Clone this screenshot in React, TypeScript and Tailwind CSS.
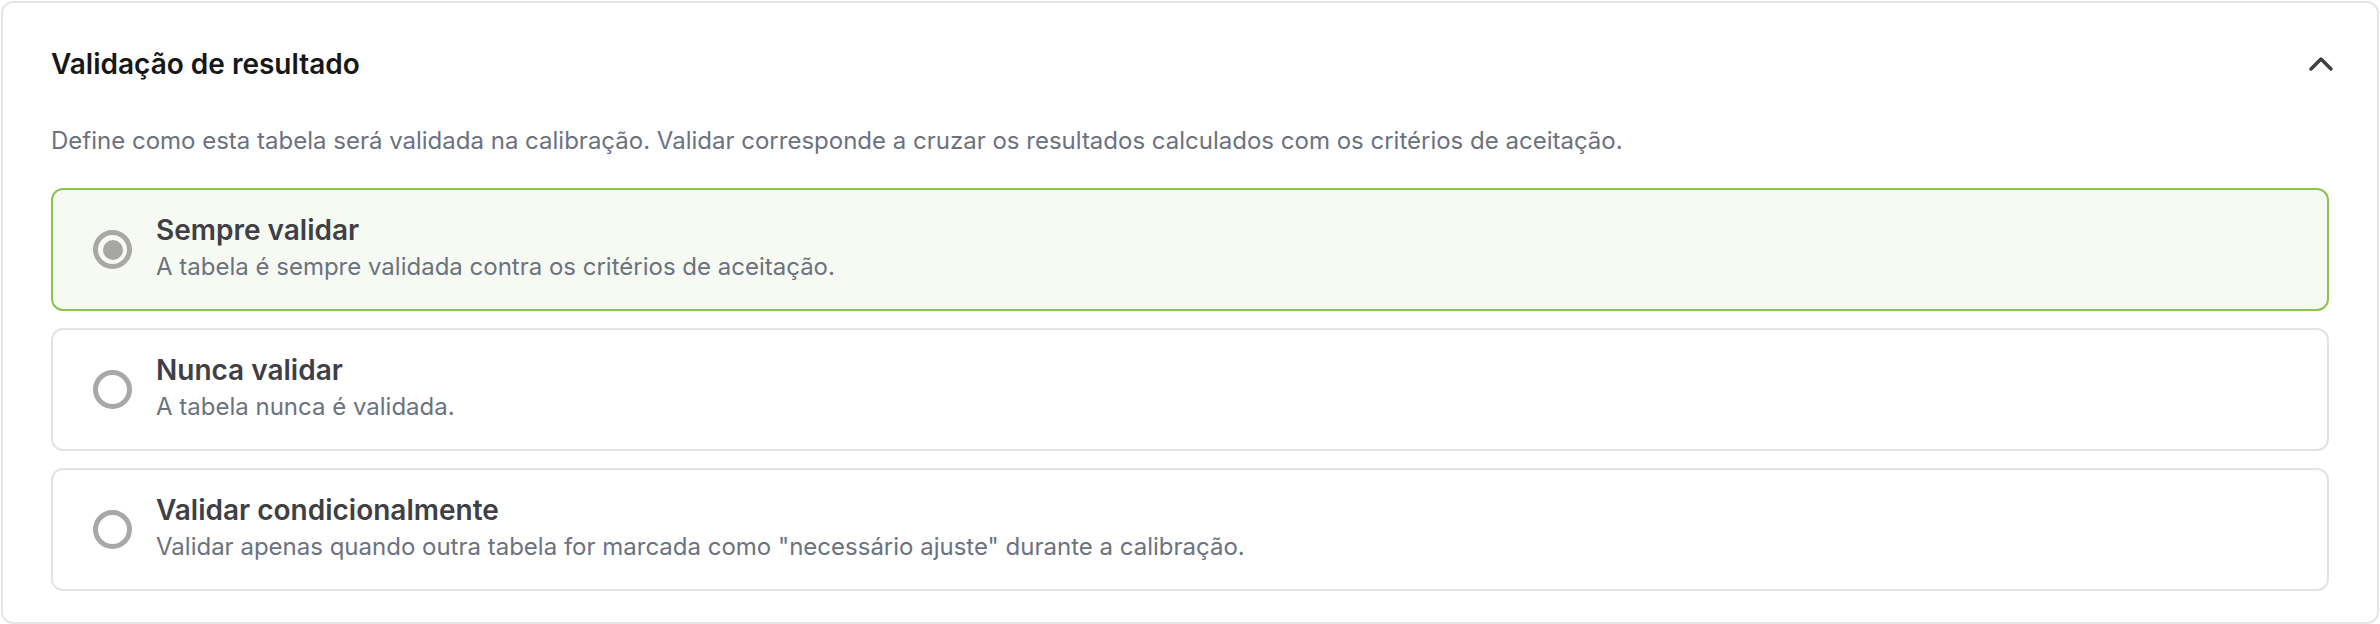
import { useState } from "react";

type Option = {
    id: string;
    title: string;
    description: string;
};

const options: Option[] = [
    {
        id: "always",
        title: "Sempre validar",
        description: "A tabela é sempre validada contra os critérios de aceitação.",
    },
    {
        id: "never",
        title: "Nunca validar",
        description: "A tabela nunca é validada.",
    },
    {
        id: "conditional",
        title: "Validar condicionalmente",
        description:
            'Validar apenas quando outra tabela for marcada como "necessário ajuste" durante a calibração.',
    },
];

const Radio = ({ checked }: { checked: boolean }): JSX.Element => (
    <span className="flex items-center justify-center shrink-0 w-[39px] h-[39px] rounded-full border-[5px] border-[#a8a8a6]">
        {checked && <span className="w-[20px] h-[20px] rounded-full bg-[#a6a6a2]" />}
    </span>
);

const OptionCard = ({
    option,
    checked,
    onSelect,
}: {
    option: Option;
    checked: boolean;
    onSelect: () => void;
}): JSX.Element => {
    return (
        <button
            type="button"
            onClick={onSelect}
            className={
                checked
                    ? "flex items-center gap-6 w-full pl-[40px] pr-6 py-[22px] text-left rounded-[12px] border-2 border-[#8cc451] bg-[#f7faf3]"
                    : "flex items-center gap-6 w-full pl-[40px] pr-6 py-[22px] text-left rounded-[12px] border-2 border-[#e3e3e3] bg-white"
            }
        >
            <Radio checked={checked} />
            <div className="flex flex-col gap-[3px] pb-[4px]">
                <p className="text-[28px] leading-[36px] font-semibold text-[#3f3f46]">{option.title}</p>
                <p className="text-[24px] leading-[32px] text-[#6b7280]">{option.description}</p>
            </div>
        </button>
    );
};

const App = (): JSX.Element => {
    const [selected, setSelected] = useState("always");

    return (
        <div className="bg-white pl-px pt-px w-[2380px] h-[624px] font-['Inter','Noto_Sans',sans-serif]">
            <section className="w-[2378px] h-[623px] rounded-[12px] border-2 border-[#e6e6e6] bg-white px-[48px] pt-[43px]">
                <div className="flex items-center justify-between">
                    <h2 className="text-[28px] leading-[36px] font-semibold text-[#171717]">
                        Validação de resultado
                    </h2>
                    <svg
                        width="26"
                        height="16"
                        viewBox="0 0 26 16"
                        fill="none"
                        stroke="#404040"
                        strokeWidth="3.5"
                        strokeLinecap="round"
                        strokeLinejoin="round"
                        className="-mr-[5px]"
                    >
                        <polyline points="3,13 13,3 23,13" />
                    </svg>
                </div>
                <p className="mt-[43px] text-[24px] leading-[32px] text-[#6b7280]">
                    Define como esta tabela será validada na calibração. Validar corresponde a cruzar os resultados
                    calculados com os critérios de aceitação.
                </p>
                <div className="mt-[31px] flex flex-col gap-[17px]">
                    {options.map((option) => (
                        <OptionCard
                            key={option.id}
                            option={option}
                            checked={selected === option.id}
                            onSelect={() => setSelected(option.id)}
                        />
                    ))}
                </div>
            </section>
        </div>
    );
};

export default App;
